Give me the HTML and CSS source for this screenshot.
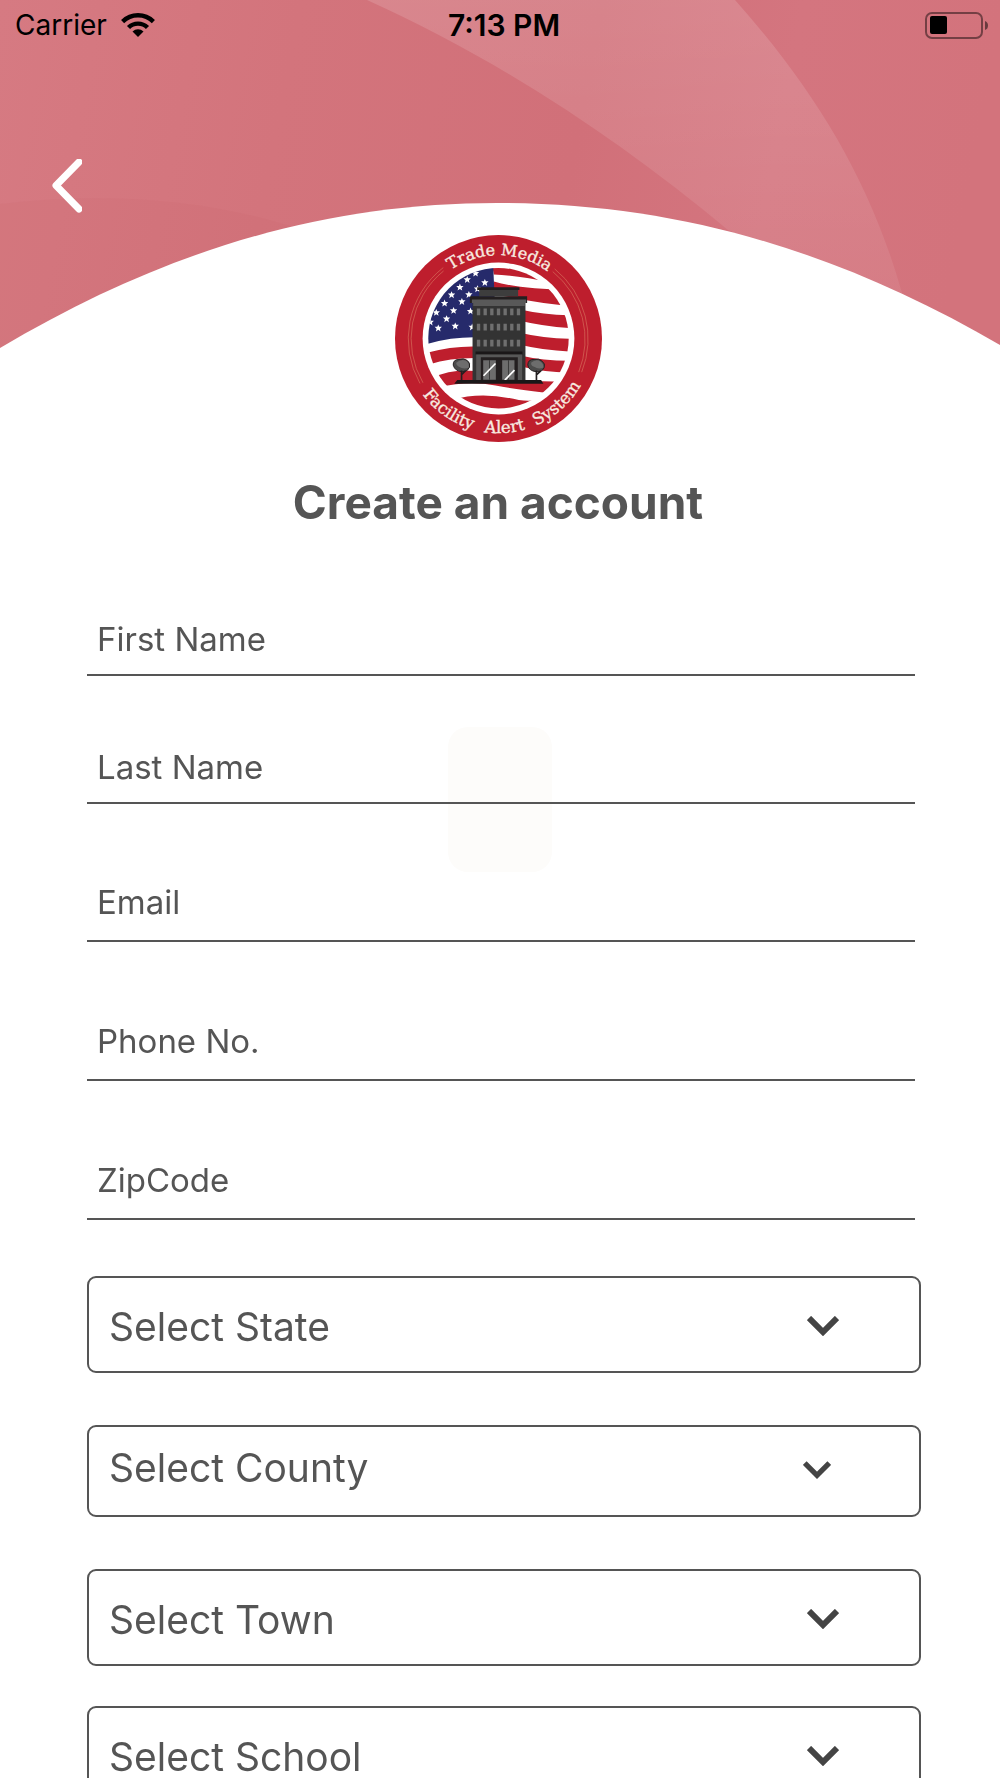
FILE: index.html
```
<!DOCTYPE html>
<html lang="en">
<head>
<meta charset="UTF-8">
<meta name="viewport" content="width=device-width, initial-scale=1.0">
<title>Create an account</title>
<link rel="stylesheet" href="styles.css">
</head>
<body>
<div class="screen">
    <div class="header">
        <svg class="header-bg" viewBox="0 0 1000 350" preserveAspectRatio="none" aria-hidden="true">
            <defs>
                <linearGradient id="base" gradientUnits="userSpaceOnUse" x1="0" y1="0" x2="970" y2="186">
                    <stop offset="0" stop-color="#d67a82"/>
                    <stop offset="0.3" stop-color="#d3747c"/>
                    <stop offset="0.6" stop-color="#d17079"/>
                    <stop offset="0.8" stop-color="#d4757f"/>
                    <stop offset="1" stop-color="#d3737c"/>
                </linearGradient>
                <linearGradient id="shine" x1="0" y1="0" x2="0" y2="1">
                    <stop offset="0" stop-color="#fff" stop-opacity="0.14"/>
                    <stop offset="1" stop-color="#fff" stop-opacity="0.05"/>
                </linearGradient>
            </defs>
            <path fill="url(#base)" d="M0 0H1000V350H0Z"/>
            <path fill="url(#shine)" d="M367 0H735C815 90 870 180 902 293V350H860Q740 230 728 230C620 140 500 60 367 0Z"/>
            <path fill="#c8646e" fill-opacity="0.15" d="M0 204C100 192 200 198 290 226V350H0Z"/>
            <path fill="#fff" d="M0 350V348C165 250 325 203 497 203C680 203 840 252 1000 345V350Z"/>
        </svg>
        <div class="status">
            <div class="carrier">
                <span>Carrier</span>
                <svg class="wifi" viewBox="0 0 34 24" aria-hidden="true">
                    <path d="M17 24L11.500 18.500A8 8 0 0 1 22.500 18.500Z"/>
                    <path fill="none" stroke="#000" stroke-width="4.400" d="M7.500 14.500A13.500 13.500 0 0 1 26.500 14.500M1.600 8.600A22 22 0 0 1 32.400 8.600"/>
                </svg>
            </div>
            <span class="time">7:13 PM</span>
            <svg class="battery" viewBox="0 0 64 27" aria-hidden="true">
                <rect x="1" y="1" width="56" height="25" rx="6" fill="none" stroke="#000" stroke-opacity="0.45" stroke-width="2"/>
                <rect x="5" y="4" width="17" height="18" rx="2"/>
                <path fill-opacity="0.5" d="M60 9Q63 10 63 13.500T60 18Z"/>
            </svg>
        </div>
        <div class="nav">
            <button class="back" type="button" aria-label="Back">
                <svg viewBox="0 0 30 54" aria-hidden="true"><path d="M27 3L4 26.500L27 50"/></svg>
            </button>
        </div>
    </div>

    <div class="brand">
        <svg class="logo" viewBox="28 28 622 622" role="img" aria-label="Trade Media Facility Alert System">
            <defs>
                <clipPath id="flag"><circle cx="339" cy="338" r="211"/></clipPath>
                <path id="arcTop" d="M196 133A250 250 0 0 1 530 179"/>
                <path id="arcBottom" d="M111 507A283 283 0 0 0 614 410"/>
                <path id="star" d="M0-11L3-4L11-4L5 2L7 10L0 5L-7 10L-5 2L-11-4L-3-4Z"/>
            </defs>
            <circle cx="339" cy="339" r="311" fill="#be1e2d"/>
            <g fill="none" stroke="#d8705c" stroke-width="2">
                <path d="M173 126A271 271 0 0 0 103 474M174 136A262 262 0 0 0 112 472"/>
                <path d="M508 130A270 270 0 0 1 589 440M502 138A262 262 0 0 1 580 440"/>
            </g>
            <circle cx="339" cy="339" r="228" fill="#fff"/>
            <g clip-path="url(#flag)">
                <g fill="#be1e2d">
                    <path d="M320 120H500V172Q400 150 325 147Z"/>
                    <path d="M325 168Q400 190 560 194V242Q470 235 325 206Z"/>
                    <path d="M400 251Q480 269 560 269V308Q480 304 400 285Z"/>
                    <path d="M400 321Q480 340 560 340V378Q480 376 400 357Z"/>
                    <path d="M400 389Q480 407 560 406V442Q480 442 400 422Z"/>
                    <path d="M110 386Q190 360 280 363V398Q200 396 130 417Z"/>
                    <path d="M140 457Q210 425 290 440Q400 470 520 468L480 502Q390 492 330 480Q250 465 160 485Z"/>
                    <path d="M200 523Q290 497 400 524Q450 532 500 512V570H200Z"/>
                </g>
                <path fill="#262a6b" d="M110 120H323L333 340Q220 325 110 360Z"/>
                <g fill="#fff">
                    <use href="#star" x="270" y="143"/>
                    <use href="#star" x="245" y="162"/>
                    <use href="#star" x="298" y="171"/>
                    <use href="#star" x="223" y="185"/>
                    <use href="#star" x="276" y="190"/>
                    <use href="#star" x="198" y="208"/>
                    <use href="#star" x="250" y="207"/>
                    <use href="#star" x="177" y="233"/>
                    <use href="#star" x="229" y="228"/>
                    <use href="#star" x="152" y="261"/>
                    <use href="#star" x="204" y="255"/>
                    <use href="#star" x="255" y="257"/>
                    <use href="#star" x="134" y="290"/>
                    <use href="#star" x="183" y="280"/>
                    <use href="#star" x="158" y="308"/>
                    <use href="#star" x="209" y="302"/>
                    <use href="#star" x="260" y="305"/>
                </g>
            </g>
            <!-- building -->
            <path fill="#231f20" d="M275 185H402V193H275ZM253 212H425V232H253Z"/>
            <path fill="#3d3d3d" d="M281 193H398V212H281Z"/>
            <path fill="#333" d="M261 232H420V466H261Z"/>
            <path fill="#595959" d="M259 222H422V232H418V241H263V232H259Z"/>
            <path stroke="#6f6f6f" stroke-width="20" stroke-dasharray="10 10" d="M274 259H405M274 305H405M274 353H405"/>
            <path fill="#1a1718" d="M270 378H411V387H270Z"/>
            <path fill="#575757" d="M272 387H410V466H272Z"/>
            <path fill="#231f20" d="M286 395H397V466H286Z"/>
            <path fill="#6d6d6d" d="M293 404H331V463H293ZM350 404H387V463H350Z"/>
            <path stroke="#3a3a3a" stroke-width="3" d="M312 404V463M369 404V463"/>
            <path stroke="#fff" stroke-width="5" d="M294 451L330 414M358 464L387 434"/>
            <!-- trees -->
            <g stroke="#231f20" stroke-width="3">
                <path fill="#4b4b4b" d="M203 419Q202 402 220 402Q235 397 245 405Q255 412 252 425Q248 438 232 439Q208 438 203 419Z"/>
                <path fill="#4b4b4b" d="M427 418Q428 401 446 402Q460 398 470 407Q481 415 476 427Q470 440 453 439Q429 436 427 418Z"/>
                <path fill="#6d6d6d" stroke="none" d="M212 412Q225 400 240 405Q252 412 250 426Q235 433 220 424Q211 421 212 412ZM437 412Q447 402 460 405Q475 412 474 426Q460 433 446 424Q436 421 437 412Z"/>
                <path fill="none" stroke-width="5" d="M228 466V435M228 448L240 436M453 466V435M453 448L466 436"/>
            </g>
            <path fill="#1a1718" d="M215 464H467L474 475H206Z"/>
            <g class="logo-text">
                <text class="logo-top"><textPath href="#arcTop">Trade Media</textPath></text>
                <text><textPath href="#arcBottom">Facility</textPath></text>
                <text><textPath href="#arcBottom" startOffset="222">Alert</textPath></text>
                <text><textPath href="#arcBottom" startOffset="380">System</textPath></text>
            </g>
        </svg>
        <h1 class="title">Create an account</h1>
    </div>

    <form class="form">
        <div class="names">
            <input class="field" type="text" placeholder="First Name" aria-label="First Name">
            <input class="field" type="text" placeholder="Last Name" aria-label="Last Name">
        </div>
        <div class="contact">
            <input class="field" type="email" placeholder="Email" aria-label="Email">
            <input class="field" type="tel" placeholder="Phone No." aria-label="Phone No.">
            <input class="field" type="text" placeholder="ZipCode" aria-label="ZipCode">
        </div>
        <div class="area">
            <div class="select">
                <select aria-label="State"><option>Select State</option></select>
                <svg class="arrow" viewBox="0 0 32 20" aria-hidden="true"><path d="M2 2L16 16L30 2"/></svg>
            </div>
            <div class="select small">
                <select aria-label="County"><option>Select County</option></select>
                <svg class="arrow" viewBox="0 0 32 20" aria-hidden="true"><path d="M2 2L16 16L30 2"/></svg>
            </div>
            <div class="select">
                <select aria-label="Town"><option>Select Town</option></select>
                <svg class="arrow" viewBox="0 0 32 20" aria-hidden="true"><path d="M2 2L16 16L30 2"/></svg>
            </div>
        </div>
        <div class="school">
            <div class="select">
                <select aria-label="School"><option>Select School</option></select>
                <svg class="arrow" viewBox="0 0 32 20" aria-hidden="true"><path d="M2 2L16 16L30 2"/></svg>
            </div>
        </div>
    </form>
    <div class="loader"></div>
</div>
</body>
</html>
```
FILE: styles.css
```
*{margin: 0; padding: 0; box-sizing: border-box;}
body{
    background: #fff;
    font-family: Inter, "Liberation Sans", sans-serif;
    color: #555;
}
.screen{
    position: relative;
    z-index: 0;
    height: 100vh;
    overflow-x: hidden;
    overflow-y: auto;
    scrollbar-width: none;
}
.header{
    position: relative;
}
.header-bg{
    position: absolute;
    left: 0;
    top: 0;
    width: 100%;
    height: 350px;
    z-index: -1;
}
.status{
    display: grid;
    grid-template-columns: 1fr auto 1fr;
    align-items: center;
    height: 50px;
    padding: 0 11px 0 15px;
    font-size: 28px;
    color: #000;
}
.carrier{
    display: flex;
    align-items: center;
    gap: 14px;
}
.wifi{
    width: 34px;
    height: 24px;
}
.time{
    padding-left: 4px;
    font-size: 30px;
    font-weight: 600;
}
.battery{
    justify-self: end;
    width: 64px;
    height: 27px;
}
.nav{
    height: 185px;
    padding: 109px 52px 0;
}
.back{
    display: block;
    background: none;
    border: none;
    cursor: pointer;
}
.back svg{
    display: block;
    width: 30px;
    height: 54px;
    fill: none;
    stroke: #fff;
    stroke-width: 7px;
    stroke-linecap: round;
    stroke-linejoin: round;
}
.brand{
    padding-right: 4px;
    text-align: center;
}
.logo{
    display: block;
    width: 207px;
    height: 207px;
    margin: 0 auto;
}
.logo-text{
    font-family: "DejaVu Serif", serif;
    font-size: 50px;
    fill: #f8ebe0;
    stroke: #f8ebe0;
    stroke-width: 1px;
}
.logo-top{
    font-size: 48px;
}
.title{
    margin-top: 32px;
    line-height: 56px;
    font-size: 46px;
    font-weight: 700;
}
.form{
    padding: 90px 79px 40px 87px;
}
.field{
    display: block;
    width: 100%;
    height: 56px;
    padding: 0 10px 17px;
    border: none;
    border-bottom: 2px solid #555;
    background: none;
    font: 33px Inter, "Liberation Sans", sans-serif;
    color: #555;
    outline: none;
}
.field::placeholder{
    color: #555;
    opacity: 1;
}
.names,
.contact{
    display: flex;
    flex-direction: column;
    gap: 72px;
    margin-bottom: 82px;
    padding-right: 6px;
}
.contact{
    gap: 83px;
    margin-bottom: 56px;
}
.contact .field{
    padding-bottom: 22px;
}
.area{
    display: flex;
    flex-direction: column;
    gap: 52px;
    margin-bottom: 40px;
}
.select{
    position: relative;
    height: 97px;
}
.select select{
    width: 100%;
    height: 100%;
    padding: 4px 20px 0;
    border: 2px solid #555;
    border-radius: 9px;
    background: none;
    font: 39px Inter, "Liberation Sans", sans-serif;
    color: #555;
    appearance: none;
    outline: none;
}
.select.small{
    height: 92px;
}
.select.small select{
    padding: 0 20px 7px;
}
.arrow{
    position: absolute;
    right: 82px;
    top: 40px;
    width: 32px;
    height: 20px;
    fill: none;
    stroke: #444;
    stroke-width: 6px;
    pointer-events: none;
}
.small .arrow{
    right: 90px;
    top: 35px;
    width: 28px;
}
.loader{
    position: fixed;
    left: 50%;
    top: 45%;
    width: 104px;
    height: 145px;
    margin: -73px 0 0 -52px;
    border-radius: 20px;
    background: #fdfcfa;
    z-index: -1;
}
```
